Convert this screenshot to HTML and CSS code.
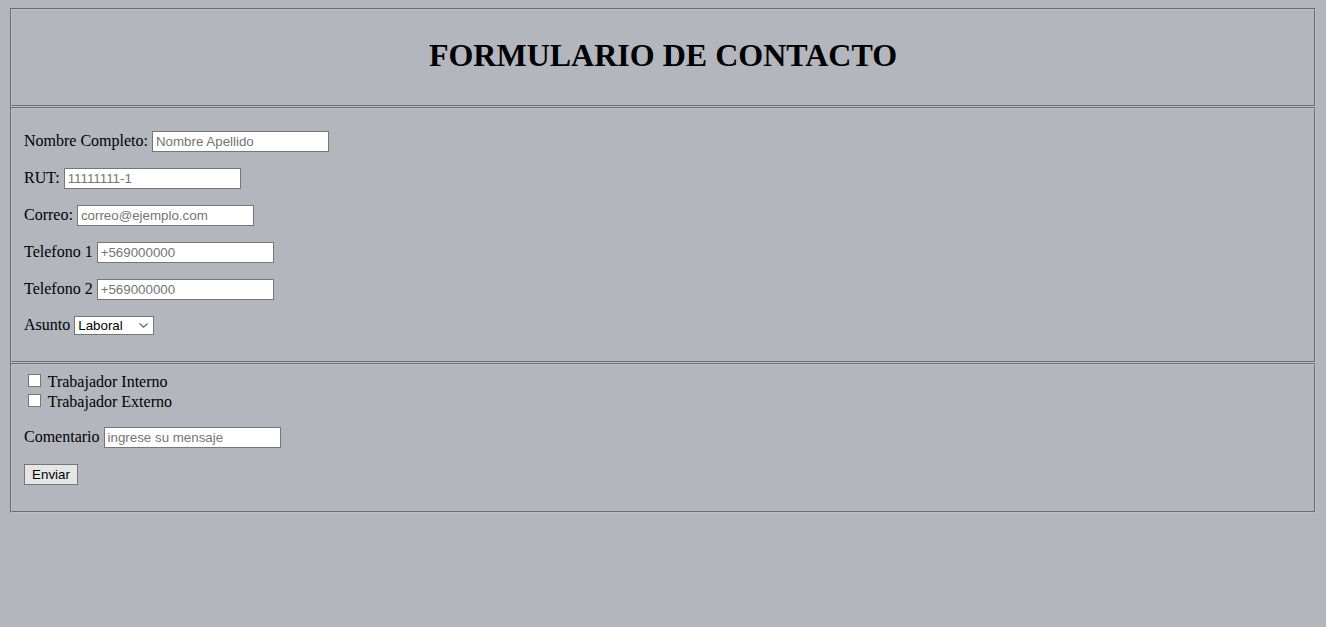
FILE: index.html
```html
<!DOCTYPE html>
<html lang="es">
<head>
<meta charset="utf-8">
<title>Formulario de contacto</title>
<link rel="stylesheet" href="styles.css">
</head>
<body class="page">
<form class="form">
  <fieldset class="box">
    <h1 class="title">FORMULARIO DE CONTACTO</h1>
  </fieldset>
  <fieldset class="box">
    <p class="row">Nombre Completo: <input class="field" type="text" placeholder="Nombre Apellido"></p>
    <p class="row">RUT: <input class="field" type="text" placeholder="11111111-1"></p>
    <p class="row">Correo: <input class="field" type="text" placeholder="correo@ejemplo.com"></p>
    <p class="row">Telefono 1 <input class="field" type="text" placeholder="+569000000"></p>
    <p class="row">Telefono 2 <input class="field" type="text" placeholder="+569000000"></p>
    <p class="row">Asunto <select class="select"><option>Laboral</option><option>Personal</option></select></p>
  </fieldset>
  <fieldset class="box">
    <input class="check" type="checkbox"> Trabajador Interno<br>
    <input class="check" type="checkbox"> Trabajador Externo<br>
    <p class="row">Comentario <input class="field" type="text" placeholder="ingrese su mensaje"></p>
    <p class="row"><button class="btn" type="button">Enviar</button></p>
  </fieldset>
</form>
</body>
</html>
```
FILE: styles.css
```css
html { background: #b3b6bd; }
.page {
  margin: 8px;
  background: #b3b6bd;
  font-family: "Liberation Serif", "Times New Roman", serif;
  font-size: 16px;
  color: #000;
}
.form { margin: 0; }
.box {
  margin: 0 2px;
  padding: 0.35em 0.75em 0.625em;
  border: 2px groove rgb(192, 192, 192);
  min-width: min-content;
}
.title {
  font-size: 32px;
  font-weight: bold;
  text-align: center;
  margin: 21.44px 0;
}
.row { margin: 16px 0; }
.field {
  font-family: "Liberation Sans", Arial, sans-serif;
  font-size: 13.333px;
  width: 177px;
  height: 21px;
  box-sizing: border-box;
  padding: 1px 3px;
  border: 1px solid #767676;
  background: #fff;
  vertical-align: baseline;
}
.field::placeholder { color: #757575; }
.select {
  -webkit-appearance: none;
  appearance: none;
  font-family: "Liberation Sans", Arial, sans-serif;
  font-size: 13.333px;
  width: 80px;
  height: 19px;
  box-sizing: border-box;
  padding: 0 16px 0 3px;
  border: 1px solid #767676;
  border-radius: 0;
  background-color: #fff;
  background-image: url("data:image/svg+xml,%3Csvg xmlns='http://www.w3.org/2000/svg' width='9' height='5' viewBox='0 0 9 5'%3E%3Cpath d='M0.5 0.5 L4.5 4.2 L8.5 0.5' fill='none' stroke='%23606060' stroke-width='1.1'/%3E%3C/svg%3E");
  background-repeat: no-repeat;
  background-position: right 5px center;
  color: #000;
}
.check {
  -webkit-appearance: none;
  appearance: none;
  width: 13px;
  height: 13px;
  margin: 3px 3px 3px 4px;
  border: 1px solid #767676;
  border-radius: 0;
  background: #fff;
  box-sizing: border-box;
  vertical-align: -3px;
}
.btn {
  font-family: "Liberation Sans", Arial, sans-serif;
  font-size: 13.333px;
  padding: 1px 6px;
  border: 1px solid #767676;
  border-radius: 0;
  background: #e6e6e6;
  color: #000;
  height: 21px;
  width: 54px;
  box-sizing: border-box;
}
```
